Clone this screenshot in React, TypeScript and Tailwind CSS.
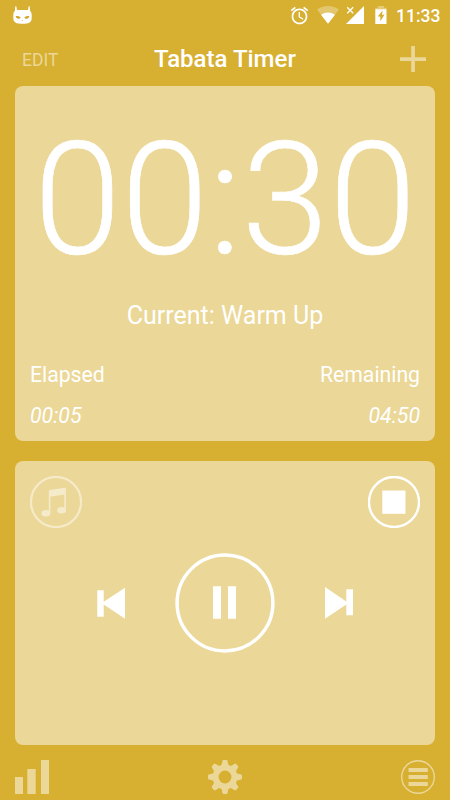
import React from 'react';

interface IconProps {
  className?: string;
}

const CyanogenIcon: React.FC<IconProps> = ({ className }) => (
  <svg viewBox="0 0 19 18" className={className}>
    <path
      d="M2.3.2h1L4 4.100h11L15.700.2h1l.4 4.600q1.600 1.300 1.600 4.100v3c0 4.400-2.900 5.900-9.200 5.900S.3 16.300.3 11.900v-3q0-2.800 1.600-4.100z"
      fill="white"
    />
    <path
      d="M2.600 10q3-.3 5.200 1.400-.8 1.300-2.500 1.300Q3.100 12.600 2.600 10zM16.400 10q-3-.3-5.200 1.400.8 1.300 2.500 1.300 2.200-.1 2.700-2.700z"
      fill="#cda22a"
    />
    <path d="M8.700 14.300h1.600l-.8.9z" fill="#d7af31" />
  </svg>
);

const AlarmIcon: React.FC<IconProps> = ({ className }) => (
  <svg viewBox="0 0 24 24" fill="white" className={className}>
    <path d="M22 5.720l-4.600-3.860-1.290 1.530 4.600 3.860L22 5.720zM7.880 3.390L6.600 1.860 2 5.710l1.290 1.530 4.590-3.850zM12.500 8H11v6l4.750 2.850.75-1.230-4-2.370V8zM12 4c-4.970 0-9 4.030-9 9s4.020 9 9 9c4.970 0 9-4.030 9-9s-4.030-9-9-9zm0 16c-3.870 0-7-3.130-7-7s3.130-7 7-7 7 3.130 7 7-3.130 7-7 7z" />
  </svg>
);

const WifiIcon: React.FC<IconProps> = ({ className }) => (
  <svg viewBox="0 0 22 18" fill="white" className={className}>
    <path d="M11 17.800 0 3.600Q5 0 11 0t11 3.600z" opacity="0.3" />
    <path d="M11 17.800 4 8.800Q7.300 6.600 11 6.600t7 2.200z" />
  </svg>
);

const SignalIcon: React.FC<IconProps> = ({ className }) => (
  <svg viewBox="0 0 18 18" className={className}>
    <path d="M0 18 18 0v18z" fill="white" />
    <path d="m1.200 1.300 6 6m0-6-6 6" stroke="white" strokeWidth="1.300" />
  </svg>
);

const BatteryIcon: React.FC<IconProps> = ({ className }) => (
  <svg viewBox="0 0 12 18" className={className}>
    <path d="M3 0h6v1.800h2.500v1.500H.3V1.800H3z" fill="white" opacity="0.35" />
    <path d="M.3 3.200h11.200V18H.3z" fill="white" />
    <path d="M7.600 4.500 2.700 10.600h2.600v4.600l4.200-6.400H7z" fill="#d7af31" />
  </svg>
);

const MusicIcon: React.FC<IconProps> = ({ className }) => (
  <svg viewBox="0 0 52 52" className={className}>
    <circle cx="26" cy="26" r="25" fill="none" stroke="white" strokeWidth="2.200" />
    <path d="M18.800 14.900q0-.7.7-.8L35 11.800q.9-.1.900.7V34h-1.600V18.500l-13.900 2.300V37.500h-1.600z" fill="white" />
    <ellipse cx="15.900" cy="37.200" rx="4.400" ry="3.300" fill="white" />
    <ellipse cx="31.600" cy="34.200" rx="4.400" ry="3.300" fill="white" />
  </svg>
);

const StopIcon: React.FC<IconProps> = ({ className }) => (
  <svg viewBox="0 0 52 52" className={className}>
    <circle cx="26" cy="26" r="25" fill="none" stroke="white" strokeWidth="2.400" />
    <path d="M14.300 14.500h23.200v23.300H14.300z" fill="white" />
  </svg>
);

const PreviousIcon: React.FC<IconProps> = ({ className }) => (
  <svg viewBox="0 0 28 32" fill="white" className={className}>
    <path d="M.3 3.300h6.400v11.500L28 .7v31L6.700 17.400v12.300H.3z" />
  </svg>
);

const NextIcon: React.FC<IconProps> = ({ className }) => (
  <svg viewBox="0 0 28 32" fill="white" className={className}>
    <path d="M0 0v31.700l21.300-14.300v10.900H28v-26h-6.700v12.300z" />
  </svg>
);

const PauseIcon: React.FC<IconProps> = ({ className }) => (
  <svg viewBox="0 0 100 100" className={className}>
    <circle cx="50" cy="50" r="47.900" fill="none" stroke="white" strokeWidth="3.500" />
    <path d="M38 33.200h8v32.500h-8zM53 33.200h8v32.500h-8z" fill="white" />
  </svg>
);

const ChartIcon: React.FC<IconProps> = ({ className }) => (
  <svg viewBox="0 0 34 34" fill="#ebd797" className={className}>
    <path d="M0 17h8v17H0zM12.300 9h8.400v25h-8.400zM26 0h8v34h-8z" />
  </svg>
);

const teeth = [0, 45, 90, 135, 180, 225, 270, 315];

const GearIcon: React.FC<IconProps> = ({ className }) => (
  <svg viewBox="-17 -17 34 34" className={className}>
    <circle r="9.400" fill="none" stroke="#ebd797" strokeWidth="6" />
    {teeth.map((angle) => (
      <path
        key={angle}
        d="M-4.300-10.800Q-2.900-12.500-2.700-15.600-2.600-17-1.300-17h2.600q1.300 0 1.400 1.400.2 3.100 1.600 4.800z"
        fill="#ebd797"
        transform={`rotate(${angle})`}
      />
    ))}
  </svg>
);

const MenuIcon: React.FC<IconProps> = ({ className }) => (
  <svg viewBox="0 0 34 34" className={className}>
    <circle cx="17" cy="17" r="16.300" fill="none" stroke="#ebd797" strokeWidth="1.400" />
    <path d="M7.500 8h19.300v4H7.500zM7.500 15h19.300v4H7.500zM7.500 22h19.300v4H7.500z" fill="#ebd797" />
  </svg>
);

const StatusBar = () => (
  <div className="flex h-8 items-center pl-[13px] pr-[10px]">
    <CyanogenIcon className="mb-[2px] h-[18px] w-[19px]" />
    <div className="ml-auto flex items-center">
      <AlarmIcon className="mb-[2px] mr-[7px] h-[21px] w-[21px]" />
      <WifiIcon className="mb-[2px] mr-[7px] h-[18px] w-[22px]" />
      <SignalIcon className="mb-[2px] mr-[11px] h-[18px] w-[18px]" />
      <BatteryIcon className="mb-[2px] mr-[9px] h-[18px] w-3" />
      <span className="w-[44px] text-right text-[17.5px] font-medium leading-8">11:33</span>
    </div>
  </div>
);

const Header = () => (
  <header className="grid h-[54px] grid-cols-[1fr_auto_1fr] items-center pl-[22px] pr-6">
    <button className="justify-self-start text-[17.5px] leading-[54px] text-[#ebd797]">EDIT</button>
    <h1 className="pl-[2px] text-[24px] font-medium leading-[55px]">Tabata Timer</h1>
    <button className="mb-[2px] justify-self-end">
      <svg viewBox="0 0 26 26" className="h-[26px] w-[26px]">
        <path d="M11.200 0h3.700v11.200H26v3.700H14.900V26h-3.700V14.900H0v-3.700h11.200z" fill="#ebd797" />
      </svg>
    </button>
  </header>
);

export default function App() {
  return (
    <div className="flex h-[800px] w-[450px] flex-col overflow-hidden bg-[#d7af31] font-['Roboto',sans-serif] text-white">
      <StatusBar />
      <Header />

      <main className="flex flex-col gap-5 px-[15px]">
        <section className="h-[355px] rounded-lg bg-[#ebd797] px-[15px] pt-[19px]">
          <div className="flex justify-center whitespace-nowrap text-[157.5px] font-light leading-[188px] [-webkit-text-stroke:0.6px_white]">
            00:30
          </div>
          <div className="mt-[7px] text-center text-[25px] leading-[32px]">Current: Warm Up</div>
          <div className="mt-[27px] flex justify-between text-[21.2px] leading-8">
            <span>Elapsed</span>
            <span>Remaining</span>
          </div>
          <div className="mt-[9px] flex justify-between text-[21.3px] italic leading-8">
            <span>00:05</span>
            <span>04:50</span>
          </div>
        </section>

        <section className="h-[284px] rounded-lg bg-[#ebd797] p-[15px]">
          <div className="flex justify-between">
            <button className="opacity-50">
              <MusicIcon className="h-[52px] w-[52px]" />
            </button>
            <button>
              <StopIcon className="h-[52px] w-[52px]" />
            </button>
          </div>
          <div className="mt-[25px] flex items-center justify-center gap-[50px]">
            <button>
              <PreviousIcon className="h-8 w-7" />
            </button>
            <button>
              <PauseIcon className="h-[100px] w-[100px]" />
            </button>
            <button>
              <NextIcon className="h-8 w-7" />
            </button>
          </div>
        </section>
      </main>

      <footer className="flex items-center justify-between px-[15px] pt-[15px]">
        <ChartIcon className="h-[34px] w-[34px]" />
        <GearIcon className="h-[34px] w-[34px]" />
        <MenuIcon className="h-[34px] w-[34px]" />
      </footer>
    </div>
  );
}
